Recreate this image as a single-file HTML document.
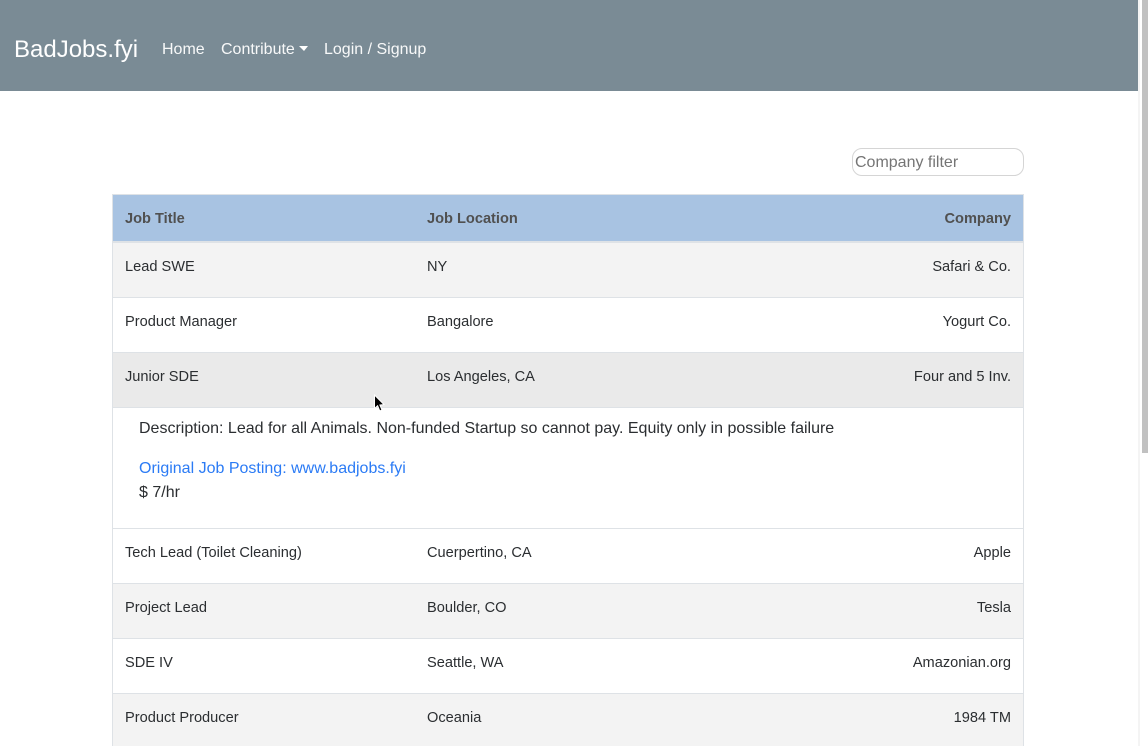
<!DOCTYPE html>
<html><head><meta charset="utf-8"><style>
html,body{margin:0;padding:0;background:#fff;overflow:hidden}
body{width:1148px;height:746px;position:relative;font-family:"Liberation Sans",Arial,sans-serif;color:#212529}
.a{position:absolute;white-space:nowrap}
#nav{left:0;top:0;width:1138px;height:91px;background:#7a8b95}
.n{color:#fff;font-size:16px;line-height:24px;top:38px;opacity:.95}
.r{left:113px;width:910px;height:55px;border-bottom:1px solid #dee2e6;box-sizing:border-box}
.g{background:#f3f3f3}
.t{font-size:14.6px;line-height:20px;color:#2b2e31;margin-top:1px}
.h{font-weight:bold;color:#505050}
.l{left:125px}.m{left:427px}.e{right:137px}
</style></head><body>
<div class="a" id="nav"></div>
<div class="a" style="left:14px;top:34px;font-size:24px;line-height:32px;color:#fff">BadJobs.fyi</div>
<div class="a n" style="left:162px">Home</div>
<div class="a n" style="left:221px">Contribute</div>
<div class="a" style="left:299px;top:46px;width:0;height:0;border-top:5px solid #fff;border-left:5px solid transparent;border-right:4px solid transparent"></div>
<div class="a n" style="left:324px">Login / Signup</div>

<div class="a" style="left:1138px;top:0;width:2px;height:746px;background:#f4f4f4"></div>
<div class="a" style="left:1142px;top:0;width:6px;height:453px;background:#c1c1c1"></div>

<div class="a" style="left:852px;top:148px;width:172px;height:28px;box-sizing:border-box;border:1px solid #d5d5d5;border-radius:10px;background:#fff"></div>
<div class="a" style="left:855px;top:153px;font-size:16px;line-height:20px;color:#757575">Company filter</div>

<div class="a" style="left:112px;top:194px;width:912px;height:552px;box-sizing:border-box;border:1px solid #dee2e6;border-bottom:0"></div>
<div class="a" style="left:113px;top:195px;width:910px;height:46px;background:#a8c3e2"></div>
<div class="a" style="left:113px;top:241px;width:910px;height:2px;background:#dee2e6"></div>
<div class="a t h l" style="top:208px">Job Title</div>
<div class="a t h m" style="top:208px">Job Location</div>
<div class="a t h e" style="top:208px">Company</div>

<div class="a r g" style="top:243px"></div>
<div class="a r" style="top:298px"></div>
<div class="a r" style="top:353px;background:#eaeaea"></div>
<div class="a r" style="top:408px;height:121px"></div>
<div class="a r" style="top:529px"></div>
<div class="a r g" style="top:584px"></div>
<div class="a r" style="top:639px"></div>
<div class="a r g" style="top:694px;height:52px;border-bottom:0"></div>

<div class="a t l" style="top:256px">Lead SWE</div><div class="a t m" style="top:256px">NY</div><div class="a t e" style="top:256px">Safari &amp; Co.</div>
<div class="a t l" style="top:311px">Product Manager</div><div class="a t m" style="top:311px">Bangalore</div><div class="a t e" style="top:311px">Yogurt Co.</div>
<div class="a t l" style="top:366px">Junior SDE</div><div class="a t m" style="top:366px">Los Angeles, CA</div><div class="a t e" style="top:366px">Four and 5 Inv.</div>

<div class="a" style="left:139px;top:417px;font-size:16px;line-height:24px;color:#2b2e31">Description: Lead for all Animals. Non-funded Startup so cannot pay. Equity only in possible failure</div>
<div class="a" style="left:139px;top:457px;font-size:16px;line-height:24px;color:#2b7bf5">Original Job Posting: www.badjobs.fyi</div>
<div class="a" style="left:139px;top:481px;font-size:16px;line-height:24px;color:#2b2e31">$ 7/hr</div>

<div class="a t l" style="top:542px">Tech Lead (Toilet Cleaning)</div><div class="a t m" style="top:542px">Cuerpertino, CA</div><div class="a t e" style="top:542px">Apple</div>
<div class="a t l" style="top:597px">Project Lead</div><div class="a t m" style="top:597px">Boulder, CO</div><div class="a t e" style="top:597px">Tesla</div>
<div class="a t l" style="top:652px">SDE IV</div><div class="a t m" style="top:652px">Seattle, WA</div><div class="a t e" style="top:652px">Amazonian.org</div>
<div class="a t l" style="top:707px">Product Producer</div><div class="a t m" style="top:707px">Oceania</div><div class="a t e" style="top:707px">1984 TM</div>

<svg class="a" style="left:373px;top:394px" width="14" height="20" viewBox="0 0 14 20"><path d="M1.5 1 L1.5 14.5 L4.6 11.7 L6.8 17 L9 16 L6.9 11 L11 10.6 Z" fill="#000" stroke="#fff" stroke-width="1"/></svg>
</body></html>
